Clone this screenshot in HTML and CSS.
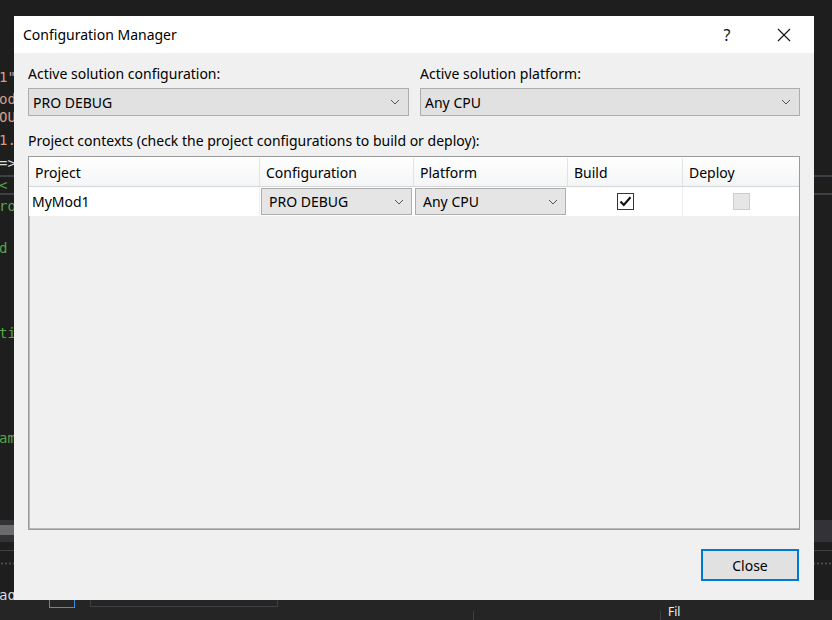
FILE: index.html
```html
<!DOCTYPE html>
<html>
<head>
<meta charset="utf-8">
<link rel="stylesheet" href="styles.css">
</head>
<body>
<div class="desktop">
  <div class="code">
    <div class="ln s" style="top:68px">1"</div>
    <div class="ln s" style="top:90px">od</div>
    <div class="ln s" style="top:108px">OU</div>
    <div class="ln s" style="top:131px">1.</div>
    <div class="ln w" style="top:154px">=&gt;</div>
    <div class="ln g" style="top:176px">&lt;</div>
    <div class="ln g" style="top:197px">ro</div>
    <div class="ln g" style="top:239px">d</div>
    <div class="ln g" style="top:324px">ti</div>
    <div class="ln g" style="top:429px">am</div>
    <div class="ln w" style="top:586px">ag</div>
  </div>
  <div class="hline" style="top:175px"></div>
  <div class="hline" style="top:193px"></div>
  <div class="panelband"><div class="thumb"></div></div>
  <div class="panelline" style="top:550px"></div>
  <div class="dots"></div>
  <div class="statusbar">
    <div class="sb-box"></div>
    <div class="sb-field"></div>
    <div class="sb-sep" style="left:473px"></div>
    <div class="sb-sep" style="left:660px"></div>
    <div class="sb-text">Fil</div>
  </div>

  <div class="dialog">
    <div class="titlebar">
      <span class="title">Configuration Manager</span>
      <span class="tb-help">?</span>
      <svg class="tb-close" width="14" height="14" viewBox="0 0 14 14"><path d="M1 1 L13 13 M13 1 L1 13" stroke="#111" stroke-width="1.1" fill="none"/></svg>
    </div>
    <div class="body">
      <div class="top-grid">
        <div class="field">
          <div class="label">Active solution configuration:</div>
          <div class="combo big"><span>PRO DEBUG</span><svg class="chev" width="10" height="6" viewBox="0 0 10 6"><path d="M1 1 L5 5 L9 1" stroke="#555" stroke-width="1" fill="none"/></svg></div>
        </div>
        <div class="field">
          <div class="label">Active solution platform:</div>
          <div class="combo big"><span>Any CPU</span><svg class="chev" width="10" height="6" viewBox="0 0 10 6"><path d="M1 1 L5 5 L9 1" stroke="#555" stroke-width="1" fill="none"/></svg></div>
        </div>
      </div>
      <div class="label ctx">Project contexts (check the project configurations to build or deploy):</div>
      <div class="grid">
        <div class="row head">
          <div class="cell">Project</div>
          <div class="cell">Configuration</div>
          <div class="cell">Platform</div>
          <div class="cell">Build</div>
          <div class="cell last">Deploy</div>
        </div>
        <div class="row data">
          <div class="cell name">MyMod1</div>
          <div class="cell cbcell"><div class="combo small"><span>PRO DEBUG</span><svg class="chev" width="10" height="6" viewBox="0 0 10 6"><path d="M1 1 L5 5 L9 1" stroke="#555" stroke-width="1" fill="none"/></svg></div></div>
          <div class="cell cbcell"><div class="combo small"><span>Any CPU</span><svg class="chev" width="10" height="6" viewBox="0 0 10 6"><path d="M1 1 L5 5 L9 1" stroke="#555" stroke-width="1" fill="none"/></svg></div></div>
          <div class="cell center"><div class="check on"><svg width="13" height="11" viewBox="0 0 13 11"><path d="M1.5 5.5 L4.8 9 L11.5 1.2" stroke="#111" stroke-width="2.1" fill="none"/></svg></div></div>
          <div class="cell center last"><div class="check off"></div></div>
        </div>
      </div>
      <div class="footer">
        <button class="btn">Close</button>
      </div>
    </div>
  </div>
</div>
</body>
</html>
```

FILE: styles.css
```css
html, body {
  margin: 0;
  padding: 0;
}
body {
  width: 832px;
  height: 620px;
  overflow: hidden;
  background: #1e1e1e;
  font-family: "Noto Sans", "Open Sans", sans-serif;
}
.desktop {
  position: relative;
  width: 832px;
  height: 620px;
  background: #1e1e1e;
}
.code .ln {
  position: absolute;
  left: -1px;
  font-family: "DejaVu Sans Mono", monospace;
  font-size: 14px;
  line-height: 18px;
}
.s { color: #d69d85; }
.w { color: #dcdcdc; }
.g { color: #57a64a; }
.hline {
  position: absolute;
  left: 0;
  width: 832px;
  height: 2px;
  background: #3f3f46;
}
.panelband {
  position: absolute;
  left: 0;
  top: 520px;
  width: 832px;
  height: 22px;
  background: #333337;
}
.thumb {
  position: absolute;
  left: 0;
  top: 5px;
  width: 14px;
  height: 10px;
  background: #6a6a6a;
}
.panelline {
  position: absolute;
  left: 0;
  width: 832px;
  height: 1px;
  background: #3f3f46;
}
.dots {
  position: absolute;
  left: 0;
  top: 562px;
  width: 832px;
  height: 3px;
  background-image: radial-gradient(circle, #4a4a4f 1px, transparent 1.2px);
  background-size: 4px 3px;
}
.statusbar {
  position: absolute;
  left: 0;
  top: 600px;
  width: 832px;
  height: 20px;
  background: #252526;
}
.sb-box {
  position: absolute;
  left: 49px;
  top: -6px;
  width: 24px;
  height: 12px;
  border: 1px solid #3a8ee6;
}
.sb-field {
  position: absolute;
  left: 90px;
  top: -4px;
  width: 186px;
  height: 9px;
  border: 1px solid #3f3f46;
}
.sb-sep {
  position: absolute;
  top: 11px;
  width: 1px;
  height: 9px;
  background: #3f3f46;
}
.sb-text {
  position: absolute;
  left: 668px;
  top: 4px;
  color: #f1f1f1;
  font-size: 12px;
  line-height: 16px;
}

/* dialog */
.dialog {
  position: absolute;
  left: 14px;
  top: 16px;
  width: 800px;
  height: 584px;
  display: flex;
  flex-direction: column;
  background: #f0f0f0;
  color: #000;
}
.titlebar {
  height: 37px;
  background: #ffffff;
  display: flex;
  align-items: center;
  padding-left: 9px;
}
.title {
  font-size: 14px;
  flex: 1;
}
.tb-help {
  font-size: 16px;
  width: 30px;
  text-align: center;
  color: #111;
}
.tb-close {
  margin-right: 23px;
  margin-left: 35px;
}
.body {
  flex: 1;
  display: flex;
  flex-direction: column;
  padding: 11px 14px 19px 14px;
}
.top-grid {
  display: grid;
  grid-template-columns: 381px 380px;
  column-gap: 11px;
}
.label {
  font-size: 14px;
  line-height: 20px;
  white-space: nowrap;
}
.field .label {
  margin-bottom: 4px;
}
.ctx {
  margin-top: 15px;
  margin-bottom: 5px;
}
.combo {
  display: flex;
  align-items: center;
  justify-content: space-between;
  box-sizing: border-box;
  border: 1px solid #adadad;
  background: #e1e1e1;
  font-size: 14px;
}
.combo.big {
  height: 28px;
  padding: 0 8px 0 4px;
}
.combo.small {
  height: 27px;
  padding: 0 7px 0 7px;
  width: 100%;
  background: #e5e5e5;
}
.grid {
  height: 374px;
  box-sizing: border-box;
  border: 1px solid #9a9a9a;
  box-shadow: inset 1px 0 0 #b9b9b9, inset 0 -1px 0 #b9b9b9;
  background: #f0f0f0;
}
.row {
  display: grid;
  grid-template-columns: 231px 154px 154px 115px 1fr;
  height: 29px;
  box-sizing: border-box;
}
.row.head {
  background: linear-gradient(#ffffff, #f4f5f6);
  border-bottom: 1px solid #d5d5d5;
  height: 30px;
  padding-top: 1px;
}
.row.data {
  background: #ffffff;
}
.cell {
  font-size: 14px;
  display: flex;
  align-items: center;
  box-sizing: border-box;
  border-right: 1px solid #e5e5e5;
  padding-left: 6px;
  white-space: nowrap;
}
.head .cell {
  border-right-color: #e2e3e5;
}
.cell.last {
  border-right: none;
}
.cell.name {
  padding-left: 3px;
  border-right-color: #f0f0f0;
}
.cell.cbcell {
  padding: 1px 2px 1px 1px;
  border-right: none;
}
.cell.center {
  justify-content: center;
  padding-left: 0;
}
.data .cell.center {
  border-right-color: #f0f0f0;
}
.check {
  width: 17px;
  height: 17px;
  box-sizing: border-box;
  display: flex;
  align-items: center;
  justify-content: center;
}
.check.on {
  border: 1px solid #333;
  background: #fff;
}
.check.off {
  border: 1px solid #cccccc;
  background: #e6e6e6;
}
.footer {
  margin-top: 19px;
  display: flex;
  justify-content: flex-end;
  padding-right: 1px;
}
.btn {
  width: 98px;
  height: 32px;
  box-sizing: border-box;
  border: 2px solid #0078d7;
  background: #e1e1e1;
  font-family: "Noto Sans", "Open Sans", sans-serif;
  font-size: 14px;
  color: #000;
  padding: 0;
}
```
